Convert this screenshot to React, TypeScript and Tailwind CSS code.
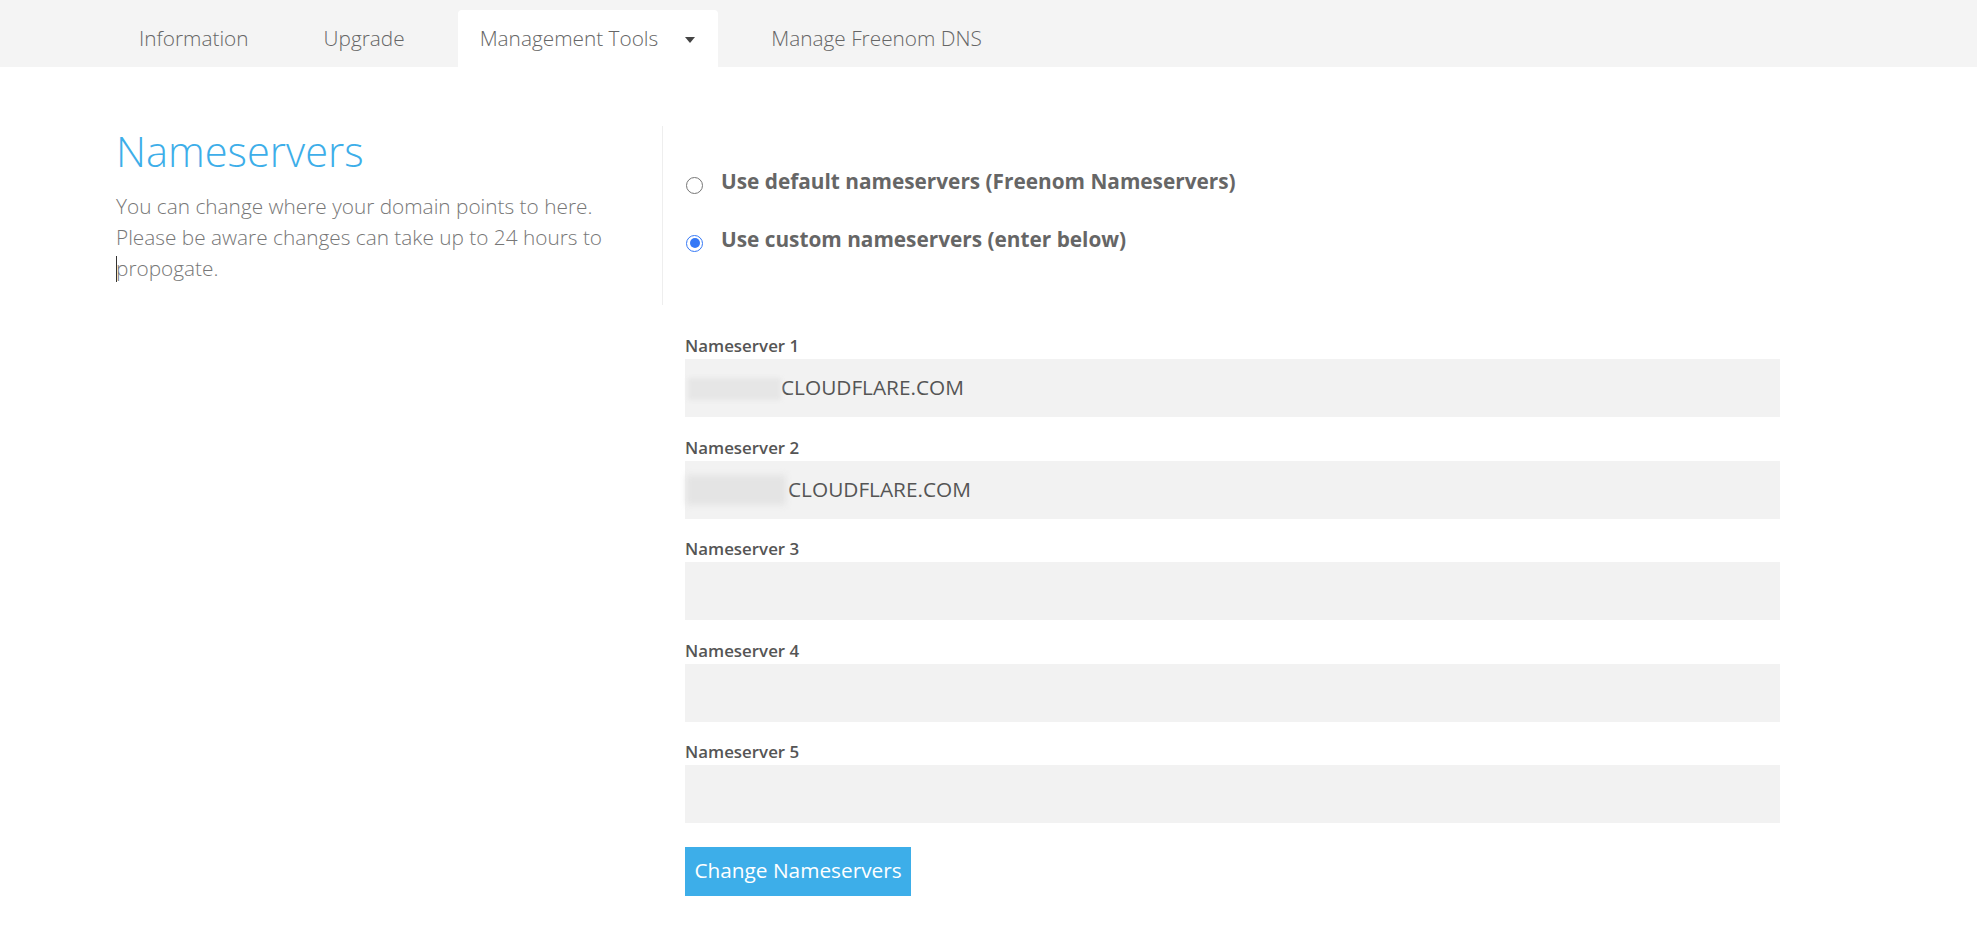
import React from 'react';

const tabs = ['Information', 'Upgrade', 'Management Tools', 'Manage Freenom DNS'];

const fields = [
  { label: 'Nameserver 1', value: 'CLOUDFLARE.COM', blur: 1 },
  { label: 'Nameserver 2', value: 'CLOUDFLARE.COM', blur: 2 },
  { label: 'Nameserver 3', value: '', blur: 0 },
  { label: 'Nameserver 4', value: '', blur: 0 },
  { label: 'Nameserver 5', value: '', blur: 0 },
];

const App: React.FC = () => {
  return (
    <div className="min-h-screen bg-white font-['Open_Sans',sans-serif] text-[#666]">
      <div className="h-[67px] bg-[#f4f4f4] pl-[117px] flex items-end gap-[31px]">
        {tabs.map((tab) => {
          const active = tab === 'Management Tools';
          return (
            <div
              key={tab}
              className={
                active
                  ? 'h-[57px] pl-[22px] pr-[23px] flex items-center bg-white rounded-t-[4px] text-[20.8px] font-light text-[#666]'
                  : 'h-[57px] px-[22px] flex items-center text-[20.8px] font-light text-[#666]'
              }
            >
              {tab}
              {active && (
                <span className="ml-[27px] mt-[2px] w-0 h-0 border-l-[5px] border-r-[5px] border-t-[6px] border-l-transparent border-r-transparent border-t-[#444]" />
              )}
            </div>
          );
        })}
      </div>

      <div className="flex pl-[116px] pt-[59px]">
        <div className="w-[546px]">
          <h1 className="text-[41.6px] font-light leading-[50px] text-[#3daee9]">Nameservers</h1>
          <p className="mt-[15px] text-[20.8px] font-light leading-[31px] text-[#777]">
            You can change where your domain points to here.
            <br />
            Please be aware changes can take up to 24 hours to
            <br />
            <span className="relative">
              <span className="absolute left-0 top-[2px] w-px h-[26px] bg-[#333]" />
              propogate.
            </span>
          </p>
        </div>

        <div className="w-[1141px]">
          <div className="h-[179px] border-l border-[#eee] pl-[23px] pt-[41px]">
            <label className="flex items-center h-[30px]">
              <span className="w-[17px] h-[17px] rounded-full border-[1.5px] border-[#767676] bg-white mt-[6px]" />
              <span className="ml-[18px] text-[20.8px] font-bold text-[#666]">
                Use default nameservers (Freenom Nameservers)
              </span>
            </label>
            <label className="flex items-center h-[30px] mt-[28px]">
              <span className="w-[17px] h-[17px] rounded-full border-[1.5px] border-[#3478f6] bg-white mt-[6px] flex items-center justify-center">
                <span className="w-[10px] h-[10px] rounded-full bg-[#3478f6]" />
              </span>
              <span className="ml-[18px] text-[20.8px] font-bold text-[#666]">
                Use custom nameservers (enter below)
              </span>
            </label>
          </div>

          <div className="pl-[23px] pr-[23px] pt-[31px]">
            {fields.map((f) => (
              <div key={f.label} className="mb-[20.5px]">
                <div className="text-[16.9px] leading-[20px] font-semibold text-[#555] mb-[3px]">{f.label}</div>
                <div className="h-[58px] bg-[#f2f2f2] flex items-center text-[20.8px] text-[#555]">
                  {f.blur === 1 && (
                    <span className="ml-[3px] w-[93px] h-[22px] bg-[#e6e6e6] blur-[2px] mt-[2px]" />
                  )}
                  {f.blur === 2 && (
                    <span className="ml-[1px] w-[100px] h-[30px] bg-[#e4e4e4] blur-[3px]" />
                  )}
                  <span className={f.blur === 1 ? 'ml-0' : 'ml-[2px]'}>{f.value}</span>
                </div>
              </div>
            ))}
            <button className="mt-[3px] h-[49px] w-[226px] bg-[#3daee9] text-white text-[20.8px]">
              Change Nameservers
            </button>
          </div>
        </div>
      </div>
    </div>
  );
};

export default App;
